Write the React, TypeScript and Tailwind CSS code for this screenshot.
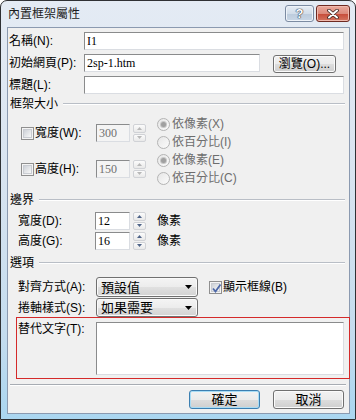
import React from "react";

const SANS = "font-['Liberation_Sans','Noto_Sans_CJK_TC',sans-serif]";
const SERIF = "font-['Liberation_Serif','Noto_Sans_CJK_TC',serif]";

function TextBox({ className = "", value = "", disabled = false }: { className?: string; value?: string; disabled?: boolean }) {
  return (
    <div
      className={`${SERIF} flex items-center border border-t-[#8a8b8c] border-l-[#8a8b8c] border-r-[#dadde2] border-b-[#dadde2] pl-[2px] text-[12px] leading-none ${
        disabled ? "bg-[#f4f4f4] text-[#707070]" : "bg-white text-black"
      } ${className}`}
    >
      {value}
    </div>
  );
}

function Spinner({ disabled = false }: { disabled?: boolean }) {
  const tri = disabled ? "#b8b8b8" : "#4f6488";
  return (
    <div className="flex h-[18px] w-[13px] flex-col gap-[1px]">
      <div className="flex flex-1 items-center justify-center rounded-[2px] border border-[#d0d2d6] bg-[linear-gradient(to_bottom,#fbfbfb,#e9e9e9)]">
        <svg width="5" height="3" viewBox="0 0 5 3">
          <path d="M0 3 L2.5 0 L5 3Z" fill={tri} />
        </svg>
      </div>
      <div className="flex flex-1 items-center justify-center rounded-[2px] border border-[#d0d2d6] bg-[linear-gradient(to_bottom,#fbfbfb,#e9e9e9)]">
        <svg width="5" height="3" viewBox="0 0 5 3">
          <path d="M0 0 L5 0 L2.5 3Z" fill={tri} />
        </svg>
      </div>
    </div>
  );
}

function Radio({ checked = false }: { checked?: boolean }) {
  return (
    <div className="flex h-[13px] w-[13px] shrink-0 items-center justify-center rounded-full border border-[#b4b4b4] bg-[linear-gradient(135deg,#e6e6e6,#fbfbfb)]">
      {checked && <div className="h-[5px] w-[5px] rounded-full bg-[#a0a0a0] shadow-[0_0_0_1px_#c8c8c8]" />}
    </div>
  );
}

function Check({ checked = false }: { checked?: boolean }) {
  return (
    <div className="relative flex h-[13px] w-[13px] shrink-0 items-center justify-center border border-[#8f8f8f] bg-[#f4f4f4]">
      <div className="h-[9px] w-[9px] border border-[#c9ccd2] bg-[linear-gradient(135deg,#cdd1d7,#f8f8f8)]" />
      {checked && (
        <svg className="absolute left-[1px] top-[1px]" width="11" height="11" viewBox="0 0 11 11">
          <path d="M2 5.5 L4.5 8.5 L9.5 1.5" fill="none" stroke="#4d68a8" strokeWidth="1.8" />
        </svg>
      )}
    </div>
  );
}

function Combo({ text, className = "" }: { text: string; className?: string }) {
  return (
    <div
      className={`flex w-[102px] items-center justify-between rounded-[3px] border border-[#707070] bg-[linear-gradient(to_bottom,#f4f4f4_0%,#ececec_50%,#e0e0e0_51%,#d3d3d3_100%)] pl-[4px] pr-[5px] shadow-[inset_0_0_0_1px_#fafafa] ${className}`}
    >
      <span className="text-[13px] leading-none text-black">{text}</span>
      <svg width="7" height="4" viewBox="0 0 7 4">
        <path d="M0 0H7L3.5 4Z" fill="#000" />
      </svg>
    </div>
  );
}

function Btn({ children, def = false, className = "" }: { children: React.ReactNode; def?: boolean; className?: string }) {
  return (
    <div
      className={`flex items-center justify-center rounded-[3px] border ${
        def ? "border-[#3c7fb1] shadow-[inset_0_0_0_1px_#a8dcf5]" : "border-[#707070] shadow-[inset_0_0_0_1px_#fbfbfb]"
      } bg-[linear-gradient(to_bottom,#f2f2f2_0%,#ebebeb_50%,#dddddd_51%,#cfcfcf_100%)] text-[12px] leading-none text-black ${className}`}
    >
      {children}
    </div>
  );
}

function Group({ title }: { title: string }) {
  return (
    <div className="flex h-[16px] items-center pl-[2px] pr-[4px]">
      <span className="text-[12px] leading-none">{title}</span>
      <div className="ml-[5px] h-[2px] flex-1 border-t border-b border-t-[#b9bec6] border-b-white" />
    </div>
  );
}

export default function App() {
  return (
    <div className={`${SANS} h-[420px] w-[356px] bg-white text-black`}>
      <div className="flex h-full w-full flex-col rounded-t-[7px] border border-[#2f3134] bg-[linear-gradient(to_bottom,#e4ebf4_0%,#d9e4f0_40%,#c4dcee_80%,#aad6f0_100%)]">
        {/* Title bar */}
        <div className="flex h-[26px] items-start justify-between pl-[7px] pr-[5px]">
          <span className="mt-[7px] text-[12px] leading-none text-[#1c1c1c]">內置框架屬性</span>
          <div className="mt-[4px] flex gap-[2px]">
            <div className="flex h-[17px] w-[29px] items-center justify-center rounded-[3px] border border-[#7b8ba2] bg-[linear-gradient(to_bottom,#e6edf5_0%,#d2dde9_50%,#bccbdc_51%,#c9d7e6_100%)] shadow-[inset_0_0_0_1px_#eef3f9]">
              <span className="text-[13px] font-bold leading-none text-white [text-shadow:0_0_1px_#2a3444,0_0_1px_#2a3444,0_0_1px_#2a3444]">?</span>
            </div>
            <div className="flex h-[17px] w-[34px] items-center justify-center rounded-[3px] border border-[#6e2a22] bg-[linear-gradient(to_bottom,#e9a99c_0%,#dc8a7b_50%,#c64b38_51%,#d4745f_100%)] shadow-[inset_0_0_0_1px_#efb9ad]">
              <svg width="12" height="10" viewBox="0 0 12 10">
                <path d="M2 1.5 L10 8.5 M10 1.5 L2 8.5" stroke="#3a2420" strokeWidth="3.6" strokeLinecap="round" />
                <path d="M2 1.5 L10 8.5 M10 1.5 L2 8.5" stroke="#ffffff" strokeWidth="2" strokeLinecap="round" />
              </svg>
            </div>
          </div>
        </div>

        {/* Client */}
        <div className="flex-1 pb-[5px] pl-[6px] pr-[5px]">
          <div className="flex h-full flex-col border border-[#8b9ab0] bg-[#f0f0f0] pt-[4px] text-[12px] leading-none">
            {/* Row 1 */}
            <div className="flex h-[18px] items-center pl-[1px]">
              <span className="w-[75px]">名稱(N):</span>
              <TextBox className="h-[18px] w-[260px]" value="I1" />
            </div>
            {/* Row 2 */}
            <div className="mt-[4px] flex h-[18px] items-start pl-[1px]">
              <span className="flex h-[18px] w-[75px] items-center">初始網頁(P):</span>
              <TextBox className="h-[18px] w-[176px]" value="2sp-1.htm" />
              <Btn className="ml-[13px] mt-[1px] h-[18px] w-[63px]">瀏覽(O)...</Btn>
            </div>
            {/* Row 3 */}
            <div className="mt-[4px] flex h-[18px] items-center pl-[1px]">
              <span className="w-[75px]">標題(L):</span>
              <TextBox className="h-[18px] w-[260px]" />
            </div>

            <div className="mt-[2px]">
              <Group title="框架大小" />
            </div>

            {/* Width row */}
            <div className="mt-[3px] flex h-[36px] items-center pl-[13px]">
              <Check />
              <span className="ml-[1px] w-[61px]">寬度(W):</span>
              <TextBox className="h-[18px] w-[34px]" value="300" disabled />
              <div className="ml-[3px]">
                <Spinner disabled />
              </div>
              <div className="ml-[11px] flex flex-col text-[#6d6d6d]">
                <div className="flex h-[18px] items-center gap-[2px]">
                  <Radio checked />
                  <span>依像素(X)</span>
                </div>
                <div className="flex h-[18px] items-center gap-[2px]">
                  <Radio />
                  <span>依百分比(I)</span>
                </div>
              </div>
            </div>
            {/* Height row */}
            <div className="flex h-[36px] items-center pl-[13px]">
              <Check />
              <span className="ml-[1px] w-[61px]">高度(H):</span>
              <TextBox className="h-[18px] w-[34px]" value="150" disabled />
              <div className="ml-[3px]">
                <Spinner disabled />
              </div>
              <div className="ml-[11px] flex flex-col text-[#6d6d6d]">
                <div className="flex h-[18px] items-center gap-[2px]">
                  <Radio checked />
                  <span>依像素(E)</span>
                </div>
                <div className="flex h-[18px] items-center gap-[2px]">
                  <Radio />
                  <span>依百分比(C)</span>
                </div>
              </div>
            </div>

            <div className="mt-[5px]">
              <Group title="邊界" />
            </div>

            <div className="mt-[4px] flex h-[18px] items-center pl-[10px]">
              <span className="w-[77px]">寬度(D):</span>
              <TextBox className="h-[18px] w-[35px]" value="12" />
              <div className="ml-[3px]">
                <Spinner />
              </div>
              <span className="ml-[11px]">像素</span>
            </div>
            <div className="mt-[2px] flex h-[18px] items-center pl-[10px]">
              <span className="w-[77px]">高度(G):</span>
              <TextBox className="h-[18px] w-[35px]" value="16" />
              <div className="ml-[3px]">
                <Spinner />
              </div>
              <span className="ml-[11px]">像素</span>
            </div>

            <div className="mt-[5px]">
              <Group title="選項" />
            </div>

            <div className="mt-[6px] flex h-[20px] items-center pl-[10px]">
              <span className="w-[78px]">對齊方式(A):</span>
              <Combo className="h-[20px]" text="預設值" />
              <div className="ml-[11px]">
                <Check checked />
              </div>
              <span className="ml-[1px]">顯示框線(B)</span>
            </div>
            <div className="mt-[1px] flex h-[19px] items-center pl-[10px]">
              <span className="w-[78px]">捲軸樣式(S):</span>
              <Combo className="h-[19px]" text="如果需要" />
            </div>

            {/* Red highlight */}
            <div className="ml-[8px] flex h-[62px] w-[334px] items-start border border-[#d42a2a] pl-[1px]">
              <span className="mt-[5px] w-[78px]">替代文字(T):</span>
              <TextBox className="mt-[4px] h-[53px] w-[248px] border-l-[#6f7072] border-t-[#6f7072]" />
            </div>

            <div className="ml-[2px] mt-[5px] h-[2px] w-[336px] border-t border-b border-t-[#a7acb3] border-b-white" />

            <div className="mt-[4px] flex justify-end gap-[13px] pr-[5px]">
              <Btn def className="h-[19px] w-[71px] text-[13px]">確定</Btn>
              <Btn className="h-[19px] w-[71px] text-[13px]">取消</Btn>
            </div>
          </div>
        </div>
      </div>
    </div>
  );
}
